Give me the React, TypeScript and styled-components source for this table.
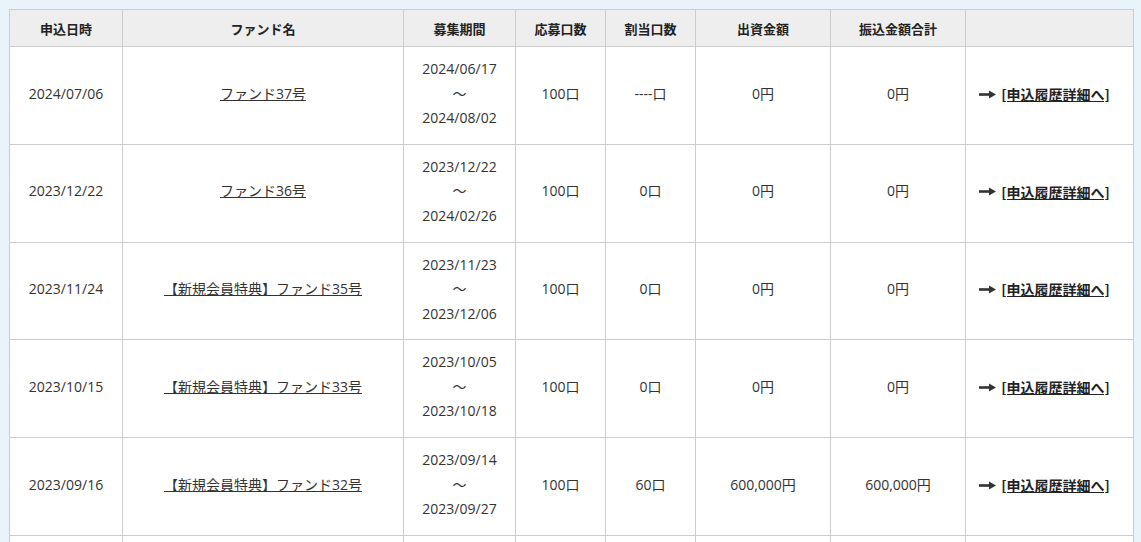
import React from "react";
import styled, { createGlobalStyle } from "styled-components";

type Row = {
  date: string;
  fund: string;
  from: string;
  to: string;
  applied: string;
  allotted: string;
  invest: string;
  transfer: string;
};

const rows: Row[] = [
  { date: "2024/07/06", fund: "ファンド37号", from: "2024/06/17", to: "2024/08/02", applied: "100口", allotted: "----口", invest: "0円", transfer: "0円" },
  { date: "2023/12/22", fund: "ファンド36号", from: "2023/12/22", to: "2024/02/26", applied: "100口", allotted: "0口", invest: "0円", transfer: "0円" },
  { date: "2023/11/24", fund: "【新規会員特典】ファンド35号", from: "2023/11/23", to: "2023/12/06", applied: "100口", allotted: "0口", invest: "0円", transfer: "0円" },
  { date: "2023/10/15", fund: "【新規会員特典】ファンド33号", from: "2023/10/05", to: "2023/10/18", applied: "100口", allotted: "0口", invest: "0円", transfer: "0円" },
  { date: "2023/09/16", fund: "【新規会員特典】ファンド32号", from: "2023/09/14", to: "2023/09/27", applied: "100口", allotted: "60口", invest: "600,000円", transfer: "600,000円" },
  { date: "2023/08/20", fund: "ファンド31号", from: "2023/08/10", to: "2023/08/24", applied: "100口", allotted: "0口", invest: "0円", transfer: "0円" },
];

const widths = [113, 281, 112, 90, 90, 135, 135, 168];
const headers = ["申込日時", "ファンド名", "募集期間", "応募口数", "割当口数", "出資金額", "振込金額合計", ""];

const ArrowIcon = () => (
  <svg width="17" height="9" viewBox="0 0 17 9">
    <rect x="0" y="3.2" width="11" height="2.6" fill="#333" />
    <path d="M10 0.5 L17 4.5 L10 8.5 Z" fill="#333" />
  </svg>
);

export default function App() {
  return (
    <>
      <GlobalStyle />
      <Page>
        <Table>
          <colgroup>
            {widths.map((w, i) => (
              <col key={i} style={{ width: w }} />
            ))}
          </colgroup>
          <thead>
            <tr>
              {headers.map((h, i) => (
                <Th key={i}>{h}</Th>
              ))}
            </tr>
          </thead>
          <tbody>
            {rows.map((r) => (
              <tr key={r.date}>
                <Td>{r.date}</Td>
                <Td>
                  <FundLink href="#">{r.fund}</FundLink>
                </Td>
                <Td>
                  {r.from}
                  <br />～<br />
                  {r.to}
                </Td>
                <Td>{r.applied}</Td>
                <Td>{r.allotted}</Td>
                <Td>{r.invest}</Td>
                <Td>{r.transfer}</Td>
                <ActionCell>
                  <DetailLink href="#">
                    <ArrowIcon />
                    <span>[申込履歴詳細へ]</span>
                  </DetailLink>
                </ActionCell>
              </tr>
            ))}
          </tbody>
        </Table>
      </Page>
    </>
  );
}

const GlobalStyle = createGlobalStyle`
  html, body {
    margin: 0;
    padding: 0;
    background: #e9f3fa;
    font-family: "Open Sans", "Noto Sans CJK JP", sans-serif;
    color: #333;
  }
`;

const Page = styled.div`
  padding: 9px 8px 0 9px;
  height: 542px;
  overflow: hidden;
  box-sizing: border-box;
`;

const Table = styled.table`
  width: 1124px;
  table-layout: fixed;
  border-collapse: collapse;
  background: #fff;
`;

const Th = styled.th`
  height: 36px;
  padding: 0;
  background: #eeeeee;
  border: 1px solid #cccccc;
  font-family: "Noto Sans CJK JP", sans-serif;
  font-size: 13px;
  font-weight: bold;
  color: #222;
  text-align: center;
  vertical-align: middle;
`;

const Td = styled.td`
  height: 97.75px;
  padding: 0 4px 3px;
  box-sizing: border-box;
  border: 1px solid #cccccc;
  font-size: 14px;
  line-height: 24.5px;
  text-align: center;
  vertical-align: middle;
  color: #333;
`;

const ActionCell = styled(Td)`
  padding-right: 14px;
`;

const FundLink = styled.a`
  color: #333;
  text-decoration: underline;
`;

const DetailLink = styled.a`
  display: inline-flex;
  align-items: center;
  gap: 5px;
  color: #222;
  font-family: "Noto Sans CJK JP", sans-serif;
  font-size: 14px;
  font-weight: bold;
  text-decoration: none;

  span {
    text-decoration: underline;
  }
`;
